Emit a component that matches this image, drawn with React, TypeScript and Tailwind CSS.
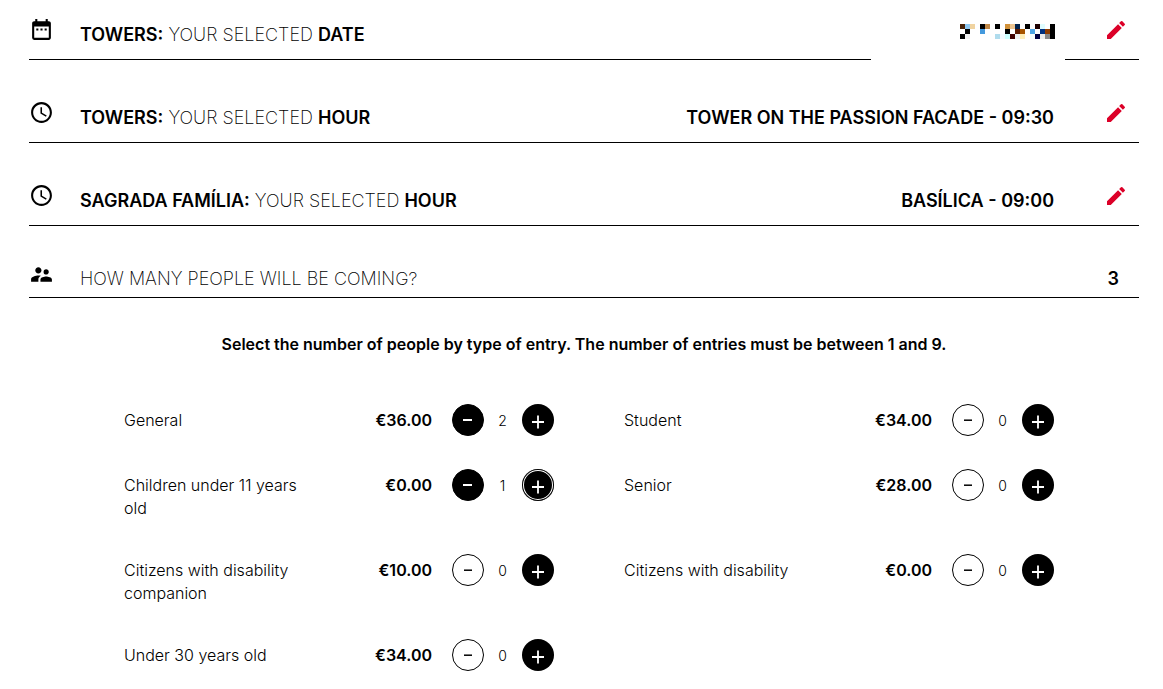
import { useState } from "react";
import type { ReactNode } from "react";
import { MdAccessTime, MdDateRange, MdEdit, MdSupervisorAccount } from "react-icons/md";

type EntryType = {
  id: string;
  name: string;
  price: number;
  amount: number;
};

const initialEntries: EntryType[] = [
  { id: "general", name: "General", price: 36, amount: 2 },
  { id: "student", name: "Student", price: 34, amount: 0 },
  { id: "children", name: "Children under 11 years old", price: 0, amount: 1 },
  { id: "senior", name: "Senior", price: 28, amount: 0 },
  { id: "companion", name: "Citizens with disability companion", price: 10, amount: 0 },
  { id: "disability", name: "Citizens with disability", price: 0, amount: 0 },
  { id: "under30", name: "Under 30 years old", price: 34, amount: 0 },
];

const MAX_ENTRIES = 9;

// colours of the pixelated date, row by row ("" is an empty cell)
const dateCells = [
  ["#4a2206", "#8fc7f0", "#f0d3a0", "", "#000", "#c08848", "", "#000", "", "#d09038", "#ecc490", "#00224d", "", "#000", "", "#200000", "#dffcff", "", "#000"],
  ["", "#000", "", "", "#4499dd", "", "", "", "", "#000", "", "#5c1a00", "#a85500", "", "#4ea6e6", "", "#00307f", "#8f3c00", "#000"],
  ["#000", "#efefef", "", "", "", "", "", "#b0dced", "#f4fbff", "#ccffff", "#400000", "#efefef", "#ffeeb8", "", "#f8ffff", "#000040", "#eeeeee", "#888888", "#000"],
];

const HiddenDate = () => (
  <svg width="95" height="15" viewBox="0 0 19 3" shapeRendering="crispEdges" role="img" aria-label="Hidden date" className="-mr-px mb-2">
    {dateCells.map((row, y) =>
      row.map((fill, x) => fill && <rect key={`${x}-${y}`} x={x} y={y} width="1" height="1" fill={fill} />)
    )}
  </svg>
);

type StepProps = {
  icon: ReactNode;
  place: string;
  field: string;
  value: ReactNode;
  splitLine?: boolean;
};

const Step = ({ icon, place, field, value, splitLine }: StepProps) => (
  <section className="mb-8">
    <div className="flex h-[50px] items-start">
      <span className="w-[51px] shrink-0 pt-2">{icon}</span>
      <h2 className="flex-1 pt-3.5 text-lg leading-6 font-extralight">
        <b className="font-semibold">{place}:</b> YOUR SELECTED <b className="font-semibold">{field}</b>
      </h2>
      <div className="flex h-[38px] items-end text-lg leading-6 font-semibold">{value}</div>
      <button type="button" aria-label={`Edit ${place} ${field}`} className="mr-[11px] ml-[50px] cursor-pointer pt-[9px] text-[#dc0028]">
        <MdEdit size={24} />
      </button>
    </div>
    <div className="flex h-px justify-between">
      <span className="flex-1 bg-black" />
      {splitLine && <span className="w-[194px]" />}
      {splitLine && <span className="w-[74px] bg-black" />}
    </div>
  </section>
);

type EntryRowProps = {
  entry: EntryType;
  focused: boolean;
  onChange: (id: string, delta: number) => void;
};

const EntryRow = ({ entry, focused, onChange }: EntryRowProps) => {
  const empty = entry.amount === 0;

  return (
    <li className="flex items-start">
      <span className="w-[190px] pt-[5px] pb-px text-base leading-[23px] font-light">{entry.name}</span>
      <span className="flex-1 pt-[5px] text-right text-base leading-[23px] font-semibold">€{entry.price.toFixed(2)}</span>
      <button
        type="button"
        aria-label={`Remove ${entry.name}`}
        onClick={() => onChange(entry.id, -1)}
        className={`ml-5 flex size-8 cursor-pointer items-center justify-center rounded-full border border-black ${empty ? "bg-white text-black" : "bg-black text-white"}`}
      >
        <svg width="10" height="2" viewBox="0 0 10 2">
          <path d={empty ? "M1 1.2h8" : "M0 1h9"} stroke="currentColor" strokeWidth={empty ? 1.5 : 2} />
        </svg>
      </button>
      <span className="w-[38px] pt-[5px] pr-px text-center text-sm leading-[23px] font-light">{entry.amount}</span>
      <button
        type="button"
        aria-label={`Add ${entry.name}`}
        onClick={() => onChange(entry.id, 1)}
        className="flex size-8 cursor-pointer items-center justify-center rounded-full bg-black pt-1 text-white"
        style={focused ? { boxShadow: "inset 0 0 0 1px #000, inset 0 0 0 2px #fff" } : undefined}
      >
        <svg width="14" height="14" viewBox="0 0 14 14">
          <path d="M1 7h12M7 .5v13" stroke="currentColor" strokeWidth="1.8" />
        </svg>
      </button>
    </li>
  );
};

const App = () => {
  const [entries, setEntries] = useState<EntryType[]>(initialEntries);
  const [lastChanged, setLastChanged] = useState("children");
  const total = entries.reduce((sum, entry) => sum + entry.amount, 0);

  const handleChange = (id: string, delta: number) => {
    if (total + delta > MAX_ENTRIES) return;
    setLastChanged(id);
    setEntries(entries.map((e) => (e.id === id ? { ...e, amount: Math.max(0, e.amount + delta) } : e)));
  };

  return (
    <main className="bg-white pt-[9px] pr-6 pb-4 pl-[29px] font-['Inter',sans-serif] text-black">
      <Step icon={<MdDateRange size={25} />} place="TOWERS" field="DATE" value={<HiddenDate />} splitLine />
      <Step icon={<MdAccessTime size={25} />} place="TOWERS" field="HOUR" value="TOWER ON THE PASSION FACADE - 09:30" />
      <Step icon={<MdAccessTime size={25} />} place="SAGRADA FAMÍLIA" field="HOUR" value="BASÍLICA - 09:00" />

      <section>
        <div className="flex h-10 items-start border-b border-black">
          <span className="w-[51px] shrink-0 pt-1">
            <MdSupervisorAccount size={25} />
          </span>
          <h2 className="flex-1 pt-[9px] text-lg leading-6 font-extralight">HOW MANY PEOPLE WILL BE COMING?</h2>
          <output className="pt-[9px] pr-5 text-lg leading-6 font-semibold">{total}</output>
        </div>
        <p className="pt-[34px] text-center text-base leading-6 font-semibold">
          Select the number of people by type of entry. The number of entries must be between 1 and 9.
        </p>
        <ul className="grid grid-cols-2 gap-x-[70px] gap-y-[33px] pt-12 pr-[85px] pl-[95px]">
          {entries.map((entry) => (
            <EntryRow key={entry.id} entry={entry} focused={entry.id === lastChanged} onChange={handleChange} />
          ))}
        </ul>
      </section>
    </main>
  );
};

export default App;
